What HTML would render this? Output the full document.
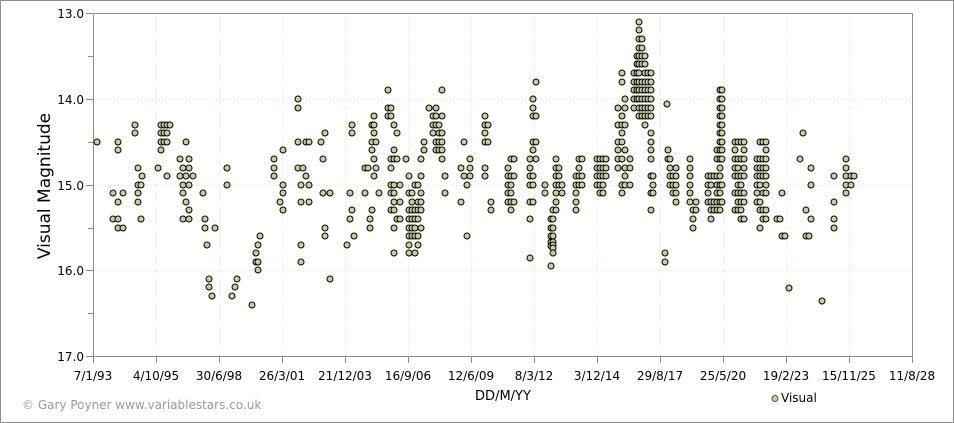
<!DOCTYPE html>
<html><head><meta charset="utf-8"><style>
html,body{margin:0;padding:0;background:#fff}
svg{display:block;font-family:"DejaVu Sans","Liberation Sans",sans-serif}
</style></head><body>
<svg id="s" width="954" height="423" viewBox="0 0 954 423" xmlns="http://www.w3.org/2000/svg">
<rect x="0.5" y="0.5" width="953" height="422" fill="#fff" stroke="#8c8c8c"/>
<g stroke="#f5dde3" stroke-dasharray="1,2" stroke-width="1">
<line x1="93" y1="99.5" x2="912" y2="99.5"/><line x1="93" y1="185.5" x2="912" y2="185.5"/><line x1="93" y1="270.5" x2="912" y2="270.5"/>
<line x1="156.5" y1="13" x2="156.5" y2="356"/><line x1="219.5" y1="13" x2="219.5" y2="356"/><line x1="282.5" y1="13" x2="282.5" y2="356"/><line x1="345.5" y1="13" x2="345.5" y2="356"/><line x1="408.5" y1="13" x2="408.5" y2="356"/><line x1="471.5" y1="13" x2="471.5" y2="356"/><line x1="534.5" y1="13" x2="534.5" y2="356"/><line x1="597.5" y1="13" x2="597.5" y2="356"/><line x1="660.5" y1="13" x2="660.5" y2="356"/><line x1="723.5" y1="13" x2="723.5" y2="356"/><line x1="786.5" y1="13" x2="786.5" y2="356"/><line x1="849.5" y1="13" x2="849.5" y2="356"/>
</g>
<g stroke="#8c8c8c" fill="none">
<polyline points="93.5,13.5 912.5,13.5 912.5,356.5 93.5,356.5 93.5,13.5"/>
<line x1="86" y1="13.5" x2="93" y2="13.5"/><line x1="88" y1="56.5" x2="93" y2="56.5"/><line x1="86" y1="99.5" x2="93" y2="99.5"/><line x1="88" y1="142.5" x2="93" y2="142.5"/><line x1="86" y1="185.5" x2="93" y2="185.5"/><line x1="88" y1="228.5" x2="93" y2="228.5"/><line x1="86" y1="270.5" x2="93" y2="270.5"/><line x1="88" y1="313.5" x2="93" y2="313.5"/><line x1="86" y1="356.5" x2="93" y2="356.5"/>
</g>
<g font-size="12" fill="#000" text-anchor="end">
<text x="84" y="18">13.0</text><text x="84" y="104">14.0</text><text x="84" y="190">15.0</text><text x="84" y="275">16.0</text><text x="84" y="361">17.0</text>
</g>
<g font-size="12" fill="#000" text-anchor="middle" id="xl"></g>
<text transform="translate(50,186) rotate(-90)" font-size="17" text-anchor="middle" fill="#000">Visual Magnitude</text>
<text x="503" y="400" font-size="13" text-anchor="middle" fill="#000">DD/M/YY</text>
<text x="22" y="409" font-size="12" fill="#9a9a9a">© Gary Poyner  www.variablestars.co.uk</text>
<circle cx="775" cy="398.5" r="3" fill="#c5d19c" stroke="#555"/>
<text x="781" y="402" font-size="12" fill="#000">Visual</text>
<g id="pts" fill="#c5d19c" stroke="#000" stroke-width="1"></g>
</svg>
<script>
var labs=[["7/1/93",93],["4/10/95",156],["30/6/98",219],["26/3/01",282],["21/12/03",345],["16/9/06",408],["12/6/09",471],["8/3/12",534],["3/12/14",597],["29/8/17",660],["25/5/20",723],["19/2/23",786],["15/11/25",849],["11/8/28",912]];
var ns="http://www.w3.org/2000/svg",xl=document.getElementById("xl"),s=document.querySelector("svg g[stroke='#8c8c8c']");
labs.forEach(function(l){var t=document.createElementNS(ns,"text");t.setAttribute("x",l[1]);t.setAttribute("y",380);t.textContent=l[0];xl.appendChild(t);
var ln=document.createElementNS(ns,"line");ln.setAttribute("x1",l[1]+.5);ln.setAttribute("x2",l[1]+.5);ln.setAttribute("y1",356);ln.setAttribute("y2",363);s.appendChild(ln);});
var d={97:[142],113:[193,219],118:[142,150,219,202,228],123:[193,228],135:[125,133],138:[168,185,202,193],141:[185,219],142:[176],158:[168],161:[125,133,142,150],164:[125,133,142],167:[125,133,142,176],170:[125],180:[159,176],183:[168,185,193,219],186:[142,176,202],189:[159,168,185,210,219],193:[176],203:[193],205:[219,228],207:[245],209:[279,287],212:[296],215:[228],227:[168,185],232:[296],235:[287],237:[279],252:[305],256:[253,262],258:[245,262,270],260:[236],274:[159,168,176],280:[202],283:[150,185,193,210],298:[99,108,142,168],301:[185,202,245,262],303:[168],306:[142,176],309:[142,185,202],321:[142],323:[159,193],325:[133,228,236],330:[193,279],347:[245],350:[219,193],352:[125,133,210],354:[236],365:[193,168],368:[168],370:[219,228],372:[125,142,210,150],374:[116,125,133,159,176],376:[168,142],379:[193],388:[90,108,116],391:[108,116,159,168,185,193,210],394:[125,150,159,185,193,202,210,228,253],397:[133,159,219],400:[185,202,219],406:[159],409:[176,193,210,219,228,236,245,253],412:[193,202,210,219,228,236],415:[185,210,219,228,236,253],418:[185,202,210,219,236,245],421:[159,176,193,202,210,228],424:[142,150],429:[108],433:[116,125,133],436:[108,116,125,142,150],439:[125,133,142,150],442:[90,116,133,142,150,159],445:[176,193],461:[168,202],464:[142,176],467:[236,185],470:[159,168,176],485:[116,125,133,142,168,176],488:[142,125],491:[202,210],508:[168,176,185,193,202],511:[159,176,185,193,202,210],514:[159,176,202],530:[159,168,176,185,202,219,258],533:[99,108,116,142,150,176,185,202],536:[82,116,142,159],545:[185,193],551:[219,228,236,242,246,266],553:[210,219,228,236,242,245,248,253],556:[159,168,176,185,193,202,210],559:[168,176,185],562:[185,193],576:[176,185,193,202,210],579:[159,168,176,185],582:[159,176,185],597:[159,168,176,185],600:[159,168,176,185,193],603:[159,168,176,185,193],606:[159,168,176],618:[108,125,142,150,159,168],622:[73,82,116,125,133,142,159,185,193],625:[99,108,125,150,168,176,185],630:[159,168,185],634:[73,82,90,99,108],637:[56,64,73,82,90,99],639:[22,30,39,48,56,64,73,82,90,99,108,116],642:[39,48,56,64,82,90,99,108,116],645:[56,64,73,82,90,99,108,116,125],648:[73,82,90,99,108,116],651:[73,82,90,99,108,116,133,142,150,159,176,193,210],653:[176,185,193],665:[262,253],667:[104],668:[150,159],670:[159,168,176,185],673:[176,185,193],676:[168,176,185,193,202],690:[159,168,176,185,193,202],693:[210,219,228],696:[202,210],708:[176,185,193,202],711:[176,185,202,210,219],714:[176,202,210],717:[150,159,176,185,193,202,210],720:[90,99,108,116,125,133,142,150,159,168,176,185,193,202,210],722:[90,99,108,116,125,133,142,150,159,185,202],735:[142,150,159,168,176,193,210],738:[142,159,168,176,185,193,202,210],741:[142,159,176,185,193,202,210,219],744:[142,150,159,168,176,193,202,219],757:[159,168,176,185,193,202],760:[142,159,168,176,185,202,210,228],763:[142,159,168,176,193,210,219],766:[142,150,159,168,176,185,193,210,219],777:[219],780:[219],782:[193,236],785:[236],789:[288],800:[159],803:[133],806:[210,236],809:[236],811:[168,185,219],822:[301],834:[176,202,219,228],846:[159,168,176,185,193],851:[176,185],854:[176]};
var g=document.getElementById("pts");
for(var x in d){d[x].forEach(function(y){var c=document.createElementNS(ns,"circle");c.setAttribute("cx",x);c.setAttribute("cy",y);c.setAttribute("r",3);g.appendChild(c);});}
</script>
</body></html>
